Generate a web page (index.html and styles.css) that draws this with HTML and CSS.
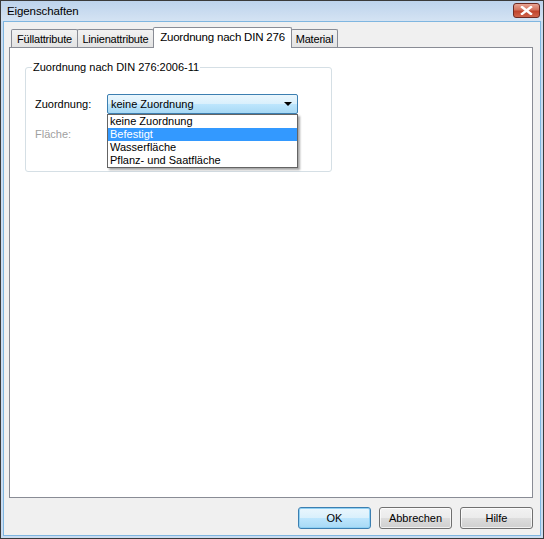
FILE: index.html
```html
<!DOCTYPE html>
<html>
<head>
<meta charset="utf-8">
<link rel="stylesheet" href="styles.css">
</head>
<body>
<div class="window">
  <div class="titlebar">
    <span class="title">Eigenschaften</span>
    <span class="close"><svg width="13" height="9" viewBox="0 0 13 9"><path d="M2 1 L11 8 M11 1 L2 8" stroke="#fff" stroke-width="2.4" stroke-linecap="square"/></svg></span>
  </div>
  <div class="client">
    <div class="tabs">
      <div class="tab t1">Füllattribute</div>
      <div class="tab t2">Linienattribute</div>
      <div class="tab sel">Zuordnung nach DIN 276</div>
      <div class="tab t4">Material</div>
    </div>
    <div class="panel">
      <fieldset class="group">
        <legend>Zuordnung nach DIN 276:2006-11</legend>
        <div class="row">
          <span class="lbl">Zuordnung:</span>
          <div class="comboWrap">
            <div class="combo"><span>keine Zuordnung</span><span class="arrow"></span></div>
            <ul class="list">
              <li>keine Zuordnung</li>
              <li class="hi">Befestigt</li>
              <li>Wasserfläche</li>
              <li>Pflanz- und Saatfläche</li>
            </ul>
          </div>
        </div>
        <div class="row2"><span class="lbl dis">Fläche:</span></div>
      </fieldset>
    </div>
    <div class="buttons">
      <div class="btn ok">OK</div>
      <div class="btn">Abbrechen</div>
      <div class="btn">Hilfe</div>
    </div>
  </div>
</div>
</body>
</html>
```
FILE: styles.css
```css
* { box-sizing: border-box; }
html, body { margin: 0; padding: 0; }
body {
  width: 544px; height: 539px; overflow: hidden;
  font-family: "Liberation Sans", Arial, sans-serif;
  font-size: 11px; color: #000;
}
.window {
  width: 544px; height: 539px;
  border: 1px solid #3a3a3a;
  background: #c9dcf1;
  display: flex; flex-direction: column;
}
.titlebar {
  height: 21px;
  background: linear-gradient(#bdd3ec, #d4e3f3);
  display: flex; align-items: center; justify-content: space-between;
  padding: 0 3px 0 6px;
}
.title { font-size: 11.5px; color: #000; letter-spacing: -0.1px; }
.close {
  width: 27px; height: 15px; margin-top: -2px;
  border: 1px solid #6d2a22; border-radius: 3px;
  background: linear-gradient(#e8a493 0%, #d2735f 45%, #c0432b 55%, #d0654c 100%);
  display: flex; align-items: center; justify-content: center;
}
.client {
  flex: 1;
  margin: 0 2px 2px 2px;
  border: 1px solid #7fb6e0;
  background: #f0f0f0;
  display: flex; flex-direction: column;
  padding: 5px 7px 6px 5px;
}
.tabs {
  display: flex; align-items: flex-end;
  height: 20px; padding-left: 2px;
  position: relative; z-index: 1;
}
.tab {
  height: 18px;
  border: 1px solid #898c95; border-bottom: none;
  background: linear-gradient(#f2f2f2, #e3e3e3);
  padding: 3px 0 0 0; text-align: center;
  border-radius: 2px 2px 0 0;
  letter-spacing: -0.2px;
}
.t1 { width: 67px; }
.t2 { width: 77px; margin-left: -1px; }
.sel {
  width: 139px; height: 21px; margin: 0 -1px -1px -1px;
  background: #fff; position: relative; z-index: 2;
  padding-top: 3px; font-size: 11.5px; letter-spacing: -0.2px;
}
.t4 { width: 47px; }
.panel {
  height: 451px;
  border: 1px solid #898c95;
  background: #fff;
  padding: 13px 0 0 15px;
}
.group {
  margin: 0; width: 307px; height: 111px;
  border: 1px solid #d5dfe5; border-radius: 3px;
  padding: 21px 0 0 9px;
}
.group legend {
  padding: 0 1px; margin-left: -3px;
  font-size: 11px;
}
.row { display: flex; align-items: center; height: 20px; }
.lbl { width: 72px; font-size: 11px; }
.dis { color: #a0a0a0; }
.comboWrap { position: relative; }
.combo {
  width: 191px; height: 20px;
  border: 1px solid #3c7fb1; border-radius: 2px;
  background: linear-gradient(#eaf6fd 0%, #d9f0fc 50%, #bee6fd 50%, #a7d9f5 100%);
  display: flex; align-items: center; justify-content: space-between;
  padding: 0 4px 0 3px;
}
.arrow {
  width: 0; height: 0;
  border-left: 4px solid transparent; border-right: 4px solid transparent;
  border-top: 4px solid #000;
  margin-right: 1px;
}
.list {
  position: absolute; left: 0; top: 20px;
  width: 191px; margin: 0; padding: 0;
  list-style: none; background: #fff;
  border: 1px solid #646464;
  box-shadow: 2px 2px 2px rgba(0,0,0,0.35);
  z-index: 5;
}
.list li { height: 13px; line-height: 13px; padding-left: 2px; font-size: 11px; }
.list li.hi { background: #3399ff; color: #fff; }
.row2 { margin-top: 14px; }
.buttons {
  display: flex; justify-content: flex-end; gap: 8px;
  margin-top: 9px;
}
.btn {
  width: 73px; height: 22px;
  border: 1px solid #707070; border-radius: 3px;
  background: linear-gradient(#f2f2f2 0%, #ebebeb 50%, #dddddd 50%, #cfcfcf 100%);
  display: flex; align-items: center; justify-content: center;
  box-shadow: inset 0 0 0 1px rgba(255,255,255,0.7);
  font-size: 11px;
}
.ok {
  border-color: #3c7fb1;
  background: linear-gradient(#eaf6fd 0%, #d9f0fc 50%, #bee6fd 50%, #a7d9f5 100%);
  box-shadow: inset 0 0 0 1px #8fd0f3;
}
```
